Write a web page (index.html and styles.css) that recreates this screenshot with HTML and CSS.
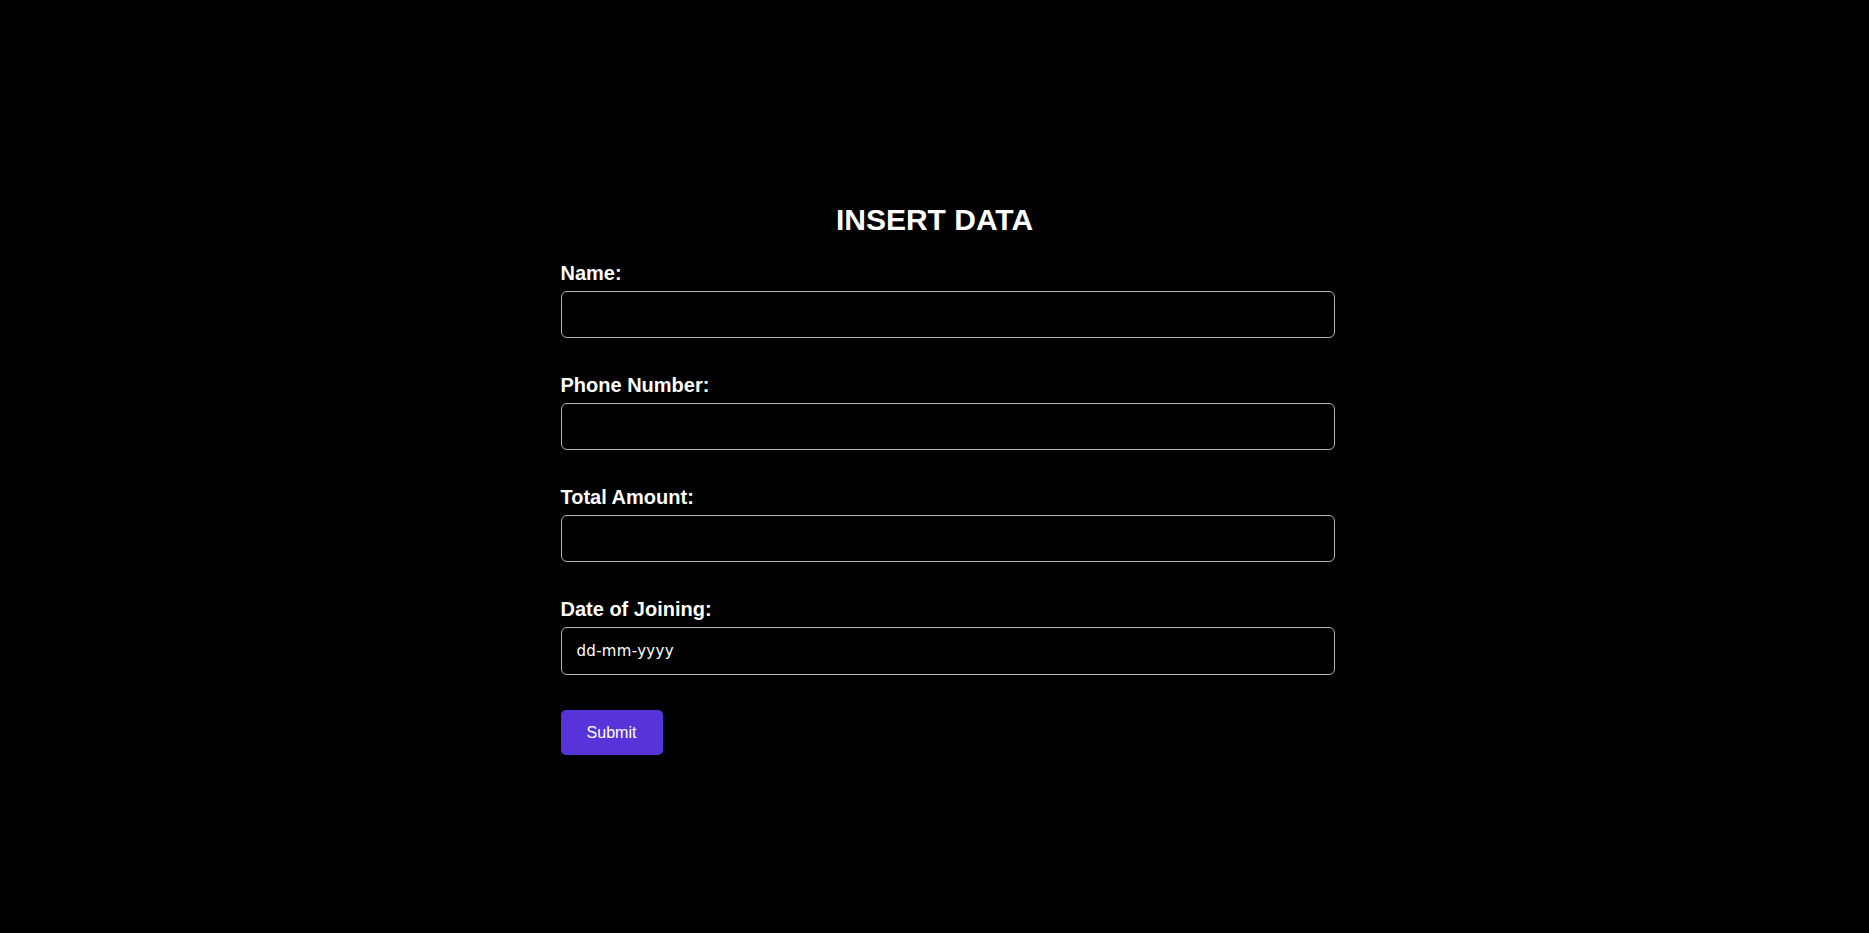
FILE: index.html
```html
<!DOCTYPE html>
<html lang="en">
<head>
<meta charset="utf-8">
<title>Insert Data</title>
<link rel="stylesheet" href="styles.css">
</head>
<body>
<div class="container">
  <h1 class="title">INSERT DATA</h1>
  <form class="form">
    <div class="field">
      <label class="label" for="name">Name:</label>
      <input class="input" id="name" type="text">
    </div>
    <div class="field">
      <label class="label" for="phone">Phone Number:</label>
      <input class="input" id="phone" type="text">
    </div>
    <div class="field">
      <label class="label" for="amount">Total Amount:</label>
      <input class="input" id="amount" type="text">
    </div>
    <div class="field field-last">
      <label class="label" for="date">Date of Joining:</label>
      <input class="input input-date" id="date" type="text" placeholder="dd-mm-yyyy">
    </div>
    <button class="submit" type="button">Submit</button>
  </form>
</div>
</body>
</html>
```

FILE: styles.css
```css
html, body {
  margin: 0;
  background: #000;
  color: #fff;
  font-family: "Liberation Sans", Arial, sans-serif;
}

.container {
  width: 748px;
  margin: 203px auto 0;
}

.title {
  margin: 0 0 26px;
  font-size: 30px;
  line-height: 33px;
  font-weight: bold;
  text-align: center;
}

.form {
  display: flex;
  flex-direction: column;
  align-items: flex-start;
}

.field {
  width: 100%;
  margin-bottom: 36px;
}

.field-last {
  margin-bottom: 35px;
}

.label {
  display: block;
  font-size: 20px;
  line-height: 23px;
  font-weight: bold;
  margin-bottom: 6px;
}

.input {
  display: block;
  box-sizing: content-box;
  width: 100%;
  height: 45px;
  padding: 0 12px;
  margin: 0;
  border: 1px solid #b4b4b4;
  border-radius: 6px;
  background: #000;
  color: #fff;
  font-family: "Liberation Sans", Arial, sans-serif;
  font-size: 16px;
  outline: none;
}

.input-date {
  height: 46px;
  padding: 0 12px 0 15px;
  width: calc(100% - 3px);
  font-family: "DejaVu Sans", sans-serif;
  font-size: 15px;
  letter-spacing: 0.3px;
}

.input-date::placeholder {
  color: #fff;
  opacity: 1;
}

.submit {
  width: 102px;
  height: 45px;
  border: none;
  border-radius: 5px;
  background: #5634d9;
  color: #fff;
  font-family: "Liberation Sans", Arial, sans-serif;
  font-size: 16px;
  padding: 0;
}
```
